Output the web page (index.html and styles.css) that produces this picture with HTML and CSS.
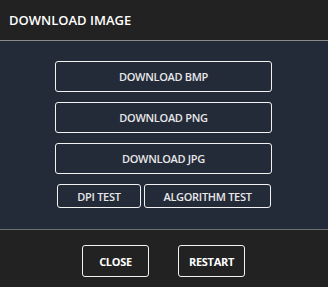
FILE: index.html
```html
<!DOCTYPE html>
<html>
<head>
<meta charset="utf-8">
<link rel="stylesheet" href="styles.css">
</head>
<body>
<div class="dialog">
  <div class="header">DOWNLOAD IMAGE</div>
  <div class="content">
    <button class="btn big">DOWNLOAD BMP</button>
    <button class="btn big">DOWNLOAD PNG</button>
    <button class="btn big">DOWNLOAD JPG</button>
    <div class="row">
      <button class="btn small dpi">DPI TEST</button>
      <button class="btn small algo">ALGORITHM TEST</button>
    </div>
  </div>
  <div class="footer">
    <button class="btn foot">CLOSE</button>
    <button class="btn foot">RESTART</button>
  </div>
</div>
</body>
</html>
```
FILE: styles.css
```css
* { box-sizing: border-box; }
html, body { margin: 0; padding: 0; background: #222222; }
body { width: 328px; height: 287px; overflow: hidden; font-family: "Open Sans", "Noto Sans", sans-serif; }
.dialog { display: flex; flex-direction: column; height: 287px; }
.header {
  height: 41px;
  background: #222222;
  border-bottom: 1px solid #8a8a8a;
  color: #ffffff;
  font-size: 13px;
  font-weight: 600;
  padding: 0 0 0 9px;
  display: flex;
  align-items: center;
}
.content {
  background: #232a38;
  height: 188px;
  display: flex;
  flex-direction: column;
  align-items: flex-start;
  padding: 20px 0 0 55px;
  gap: 10px;
}
.btn {
  font-family: "Open Sans", "Noto Sans", sans-serif;
  background: transparent;
  border: 1px solid #f2f2f2;
  border-radius: 3px;
  color: #e8e8e8;
  font-size: 11px;
  font-weight: 600;
  letter-spacing: -0.3px;
  padding: 0;
  margin: 0;
  display: flex;
  align-items: center;
  justify-content: center;
}
.big { width: 217px; height: 31px; }
.row { display: flex; gap: 3px; margin-left: 2px; }
.small { height: 24px; }
.dpi { width: 84px; }
.algo { width: 127px; }
.footer {
  flex: 1;
  background: #222222;
  border-top: 1px solid #6e6e6e;
  display: flex;
  justify-content: flex-start;
  gap: 29px;
  padding: 15px 0 0 82px;
}
.foot { width: 67px; height: 32px; color: #ffffff; font-weight: 700; }
```
